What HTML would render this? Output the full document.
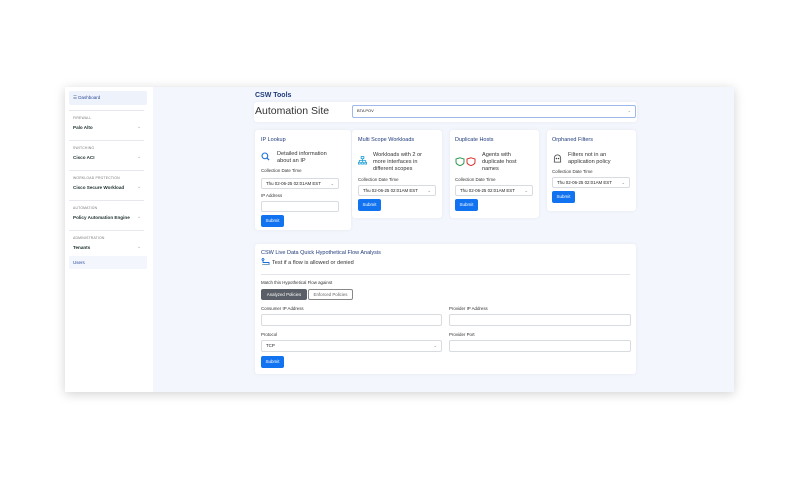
<!DOCTYPE html>
<html><head><meta charset="utf-8"><style>
*{box-sizing:border-box;margin:0;padding:0}
body{width:800px;height:480px;background:#fff;font-family:"Liberation Sans",Arial,sans-serif;position:relative;overflow:hidden;color:#333}
.abs{position:absolute}
.win{left:65px;top:87px;width:669px;height:305px;background:#f3f6fd;box-shadow:0 2px 10px rgba(0,0,0,.18)}
.side{left:65px;top:87px;width:88px;height:305px;background:#fff}
.card{background:#fff;border-radius:3px;box-shadow:0 0 3px rgba(0,0,0,.06)}
.t{font-size:5px;white-space:nowrap}
.sec{font-size:3.4px;color:#777;letter-spacing:.2px}
.item{font-size:4.6px;font-weight:bold;color:#233}
.hr{height:1px;background:#e6e8ee;width:75px;left:69px}
.chev{font-size:5px;color:#aaa}
.sel{background:#fff;border:1px solid #d8dbe0;border-radius:2px;font-size:4.4px;padding:2px 4px;color:#222}
.btn{background:#1273f0;color:#fff;border-radius:2px;font-size:4.5px;text-align:center;line-height:12px}
.ttl{font-size:5.5px;color:#1f3a7a}
.inp{background:#fff;border:1px solid #d8dbe0;border-radius:2px}
</style></head><body>
<div class="abs win"></div>
<div class="abs side"></div>
<div class="abs" style="left:69px;top:91px;width:78px;height:14px;background:#eef2fb;border-radius:2px"></div>
<div class="abs t" style="left:73px;top:95px;font-size:4.5px;color:#2a4a9a">☰ Dashboard</div>
<div class="abs hr" style="top:110px"></div>
<div class="abs sec" style="left:73px;top:116px">FIREWALL</div>
<div class="abs item" style="left:73px;top:125px">Palo Alto</div><div class="abs chev" style="left:137px;top:124px">⌄</div>
<div class="abs hr" style="top:140px"></div>
<div class="abs sec" style="left:73px;top:146px">SWITCHING</div>
<div class="abs item" style="left:73px;top:155px">Cisco ACI</div><div class="abs chev" style="left:137px;top:154px">⌄</div>
<div class="abs hr" style="top:170px"></div>
<div class="abs sec" style="left:73px;top:176px">WORKLOAD PROTECTION</div>
<div class="abs item" style="left:73px;top:185px">Cisco Secure Workload</div><div class="abs chev" style="left:137px;top:184px">⌄</div>
<div class="abs hr" style="top:200px"></div>
<div class="abs sec" style="left:73px;top:206px">AUTOMATION</div>
<div class="abs item" style="left:73px;top:215px">Policy Automation Engine</div><div class="abs chev" style="left:137px;top:214px">⌄</div>
<div class="abs hr" style="top:230px"></div>
<div class="abs sec" style="left:73px;top:236px">ADMINISTRATION</div>
<div class="abs item" style="left:73px;top:245px">Tenants</div><div class="abs chev" style="left:137px;top:244px">⌄</div>
<div class="abs" style="left:69px;top:256px;width:78px;height:13px;background:#f3f6fd"></div>
<div class="abs t" style="left:73px;top:260px;font-size:4.5px;color:#2a4a9a">Users</div>

<div class="abs t" style="left:255px;top:92px;font-size:7px;font-weight:bold;color:#1f3a7a">CSW Tools</div>
<div class="abs card" style="left:254px;top:102px;width:383px;height:20px"></div>
<div class="abs t" style="left:255px;top:105px;font-size:10.5px;color:#333">Automation Site</div>
<div class="abs sel" style="left:352px;top:105px;width:284px;height:13px;border-color:#9db8ea;font-size:4px">BTA POV<span style="float:right;color:#888">⌄</span></div>

<!-- IP Lookup -->
<div class="abs card" style="left:255px;top:130px;width:96px;height:100px"></div>
<div class="abs ttl" style="left:261px;top:137px">IP Lookup</div>
<svg class="abs" style="left:261px;top:152px" width="9" height="9" viewBox="0 0 10 10"><circle cx="4.3" cy="4.3" r="3.2" fill="none" stroke="#1c6fd8" stroke-width="1.2"/><path d="M6.6 6.6 9 9" stroke="#1c6fd8" stroke-width="1.3"/></svg>
<div class="abs t" style="left:277px;top:151px;font-size:5.6px;line-height:7px;color:#333">Detailed information<br>about an IP</div>
<div class="abs t" style="left:261px;top:168px;font-size:4.4px">Collection Date Time</div>
<div class="abs sel" style="left:261px;top:178px;width:78px;height:11px">Thu 02-06-25 02:01AM EST <span style="float:right;color:#888">⌄</span></div>
<div class="abs t" style="left:261px;top:193px;font-size:4.4px">IP Address</div>
<div class="abs inp" style="left:261px;top:201px;width:78px;height:11px"></div>
<div class="abs btn" style="left:261px;top:215px;width:23px;height:12px">Submit</div>

<!-- Multi -->
<div class="abs card" style="left:352px;top:130px;width:90px;height:88px"></div>
<div class="abs ttl" style="left:358px;top:137px">Multi Scope Workloads</div>
<svg class="abs" style="left:358px;top:156px" width="9" height="9" viewBox="0 0 10 10" fill="none" stroke="#20a0d8" stroke-width=".9"><rect x="3.5" y=".5" width="3" height="2.5"/><path d="M5 3v2M1.5 7V5h7v2M5 5v2"/><rect x=".5" y="7" width="2" height="2"/><rect x="4" y="7" width="2" height="2"/><rect x="7.5" y="7" width="2" height="2"/></svg>
<div class="abs t" style="left:373px;top:152px;font-size:5.6px;line-height:7px">Workloads with 2 or<br>more interfaces in<br>different scopes</div>
<div class="abs t" style="left:358px;top:177px;font-size:4.4px">Collection Date Time</div>
<div class="abs sel" style="left:358px;top:185px;width:78px;height:11px">Thu 02-06-25 02:01AM EST <span style="float:right;color:#888">⌄</span></div>
<div class="abs btn" style="left:358px;top:199px;width:23px;height:12px">Submit</div>

<!-- Duplicate -->
<div class="abs card" style="left:450px;top:130px;width:89px;height:88px"></div>
<div class="abs ttl" style="left:455px;top:137px">Duplicate Hosts</div>
<svg class="abs" style="left:455px;top:157px" width="22" height="9" viewBox="0 0 22 9" fill="none" stroke-width="1"><path d="M5 .8 9 2v3c0 2-2 3-4 3.6C3 8 1 7 1 5V2z" stroke="#2a9a50"/><path d="M16 .8 20 2v3c0 2-2 3-4 3.6C14 8 12 7 12 5V2z" stroke="#d83030"/></svg>
<div class="abs t" style="left:482px;top:152px;font-size:5.6px;line-height:7px">Agents with<br>duplicate host<br>names</div>
<div class="abs t" style="left:455px;top:177px;font-size:4.4px">Collection Date Time</div>
<div class="abs sel" style="left:455px;top:185px;width:78px;height:11px">Thu 02-06-25 02:01AM EST <span style="float:right;color:#888">⌄</span></div>
<div class="abs btn" style="left:455px;top:199px;width:23px;height:12px">Submit</div>

<!-- Orphaned -->
<div class="abs card" style="left:547px;top:130px;width:89px;height:81px"></div>
<div class="abs ttl" style="left:552px;top:137px">Orphaned Filters</div>
<svg class="abs" style="left:553px;top:154px" width="9" height="9" viewBox="0 0 10 10" fill="none" stroke="#444" stroke-width=".9"><path d="M1.5 9V4.5a3.5 3.5 0 0 1 7 0V9H1.5z"/><circle cx="3.8" cy="5" r=".4" fill="#444"/><circle cx="6.2" cy="5" r=".4" fill="#444"/></svg>
<div class="abs t" style="left:568px;top:152px;font-size:5.6px;line-height:7px">Filters not in an<br>application policy</div>
<div class="abs t" style="left:552px;top:169px;font-size:4.4px">Collection Date Time</div>
<div class="abs sel" style="left:552px;top:177px;width:78px;height:11px">Thu 02-06-25 02:01AM EST <span style="float:right;color:#888">⌄</span></div>
<div class="abs btn" style="left:552px;top:191px;width:23px;height:12px">Submit</div>

<!-- Flow -->
<div class="abs card" style="left:255px;top:244px;width:381px;height:130px"></div>
<div class="abs ttl" style="left:261px;top:250px">CSW Live Data Quick Hypothetical Flow Analysis</div>
<svg class="abs" style="left:261px;top:258px" width="10" height="9" viewBox="0 0 10 9" fill="none" stroke="#1c6fd8" stroke-width=".9"><circle cx="2" cy="1.5" r="1"/><path d="M2 2.5v2h6v2H2.5"/><path d="M1 6.5h7" stroke="#8ab"/></svg>
<div class="abs t" style="left:272px;top:260px;font-size:5.6px">Test if a flow is allowed or denied</div>
<div class="abs" style="left:261px;top:274px;width:369px;height:1px;background:#e3e5ea"></div>
<div class="abs t" style="left:261px;top:280px;font-size:4.4px">Match this Hypothetical Flow against</div>
<div class="abs" style="left:261px;top:289px;width:46px;height:11px;background:#5a5e66;border-radius:2px;color:#fff;font-size:4.4px;text-align:center;line-height:11px">Analyzed Policies</div>
<div class="abs" style="left:308px;top:289px;width:45px;height:11px;border:1px solid #888;border-radius:2px;color:#666;font-size:4.4px;text-align:center;line-height:9px">Enforced Policies</div>
<div class="abs t" style="left:261px;top:306px;font-size:4.4px">Consumer IP Address</div>
<div class="abs inp" style="left:261px;top:314px;width:181px;height:12px"></div>
<div class="abs t" style="left:449px;top:306px;font-size:4.4px">Provider IP Address</div>
<div class="abs inp" style="left:449px;top:314px;width:182px;height:12px"></div>
<div class="abs t" style="left:261px;top:332px;font-size:4.4px">Protocol</div>
<div class="abs sel" style="left:261px;top:340px;width:181px;height:12px">TCP<span style="float:right;color:#888">⌄</span></div>
<div class="abs t" style="left:449px;top:332px;font-size:4.4px">Provider Port</div>
<div class="abs inp" style="left:449px;top:340px;width:182px;height:12px"></div>
<div class="abs btn" style="left:261px;top:356px;width:23px;height:12px">Submit</div>
</body></html>
